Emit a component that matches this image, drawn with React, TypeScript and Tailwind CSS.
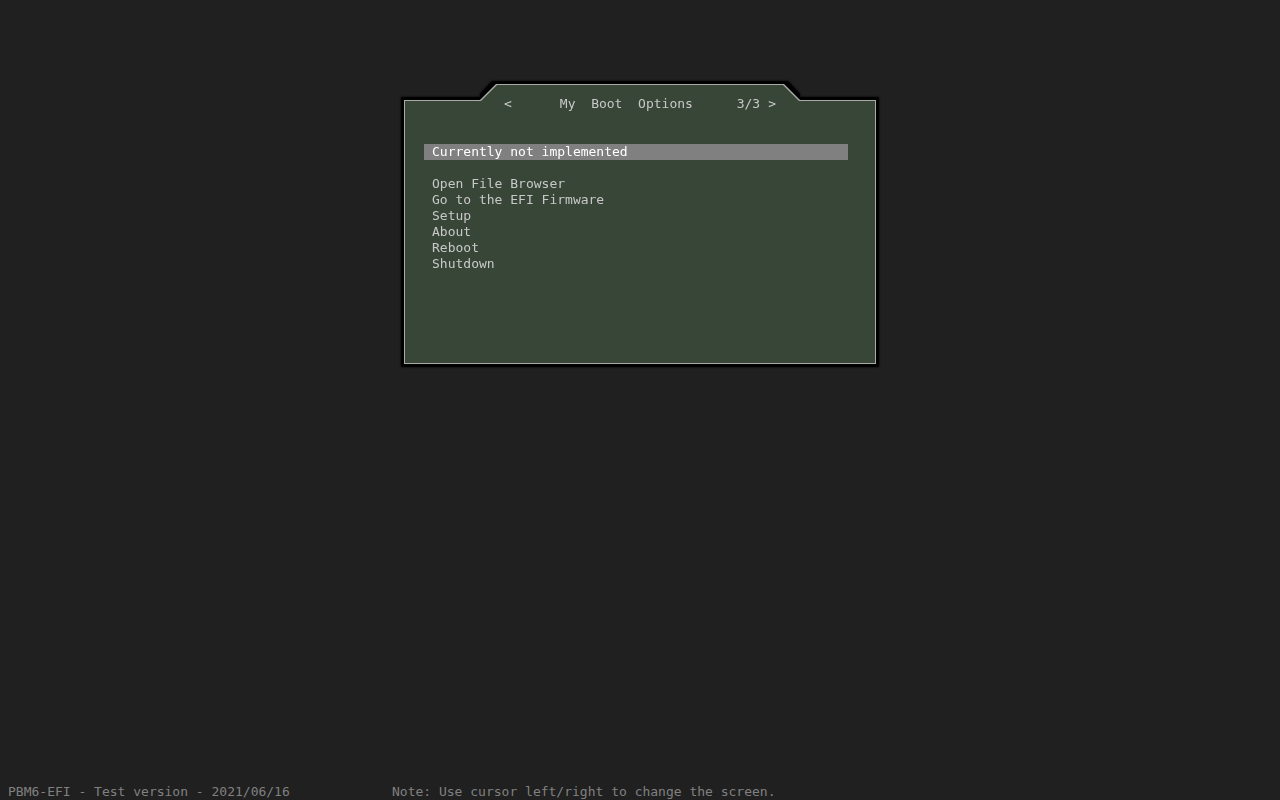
import React, { useState } from 'react';

const menuItems = [
  'Open File Browser',
  'Go to the EFI Firmware',
  'Setup',
  'About',
  'Reboot',
  'Shutdown',
];

// Folder outline: a raised tab with 16px slanted shoulders on a plain box
const folderShape =
  '[clip-path:polygon(0_16px,76px_16px,92px_0,calc(100%-92px)_0,calc(100%-76px)_16px,100%_16px,100%_100%,0_100%)]';

// Black rim behind the folder, cut straight where the shoulders begin
const rimShape =
  '[clip-path:polygon(0_17px,1px_16px,79px_16px,79px_13px,91px_0,calc(100%-91px)_0,calc(100%-79px)_13px,calc(100%-79px)_16px,calc(100%-1px)_16px,100%_17px,100%_calc(100%-1px),calc(100%-1px)_100%,1px_100%,0_calc(100%-1px))]';

interface MenuEntryProps {
  label: string;
  selected: boolean;
  onSelect: () => void;
}

const MenuEntry: React.FC<MenuEntryProps> = ({ label, selected, onSelect }) => (
  <li>
    <button
      onClick={onSelect}
      className={`block w-full px-2 text-left outline-none ${
        selected ? 'bg-[#808080] text-white' : 'text-[#c8c8c8]'
      }`}
    >
      {label}
    </button>
  </li>
);

export default function App() {
  const [selected, setSelected] = useState('Currently not implemented');

  return (
    <div className="min-h-screen flex flex-col bg-[#202020] font-['DejaVu_Sans_Mono',monospace] text-[13px] leading-4 whitespace-pre">
      <main className="flex-1 px-4 pt-[81px]">
        <div className="mx-auto max-w-[478px] drop-shadow-[0_0_1px_#000]">
          <div className={`bg-black p-[3px] ${rimShape}`}>
            <div className={`bg-[#a8aca8] p-px ${folderShape}`}>
              <div className={`min-h-[278px] bg-[#384638] pt-[11px] pr-[27px] pb-4 pl-[19px] ${folderShape}`}>
                {/* Tab */}
                <header className="flex items-center pl-20 pr-[72px] text-[#c8c8c8]">
                  <button aria-label="Previous screen">&lt;</button>
                  <h1 className="ml-12">My  Boot  Options</h1>
                  <span className="ml-auto">3/3</span>
                  <button aria-label="Next screen" className="ml-2">&gt;</button>
                </header>

                {/* Entries */}
                <ul className="mt-8">
                  <MenuEntry
                    label="Currently not implemented"
                    selected={selected === 'Currently not implemented'}
                    onSelect={() => setSelected('Currently not implemented')}
                  />
                </ul>
                <ul className="mt-4">
                  {menuItems.map((item) => (
                    <MenuEntry
                      key={item}
                      label={item}
                      selected={selected === item}
                      onSelect={() => setSelected(item)}
                    />
                  ))}
                </ul>
              </div>
            </div>
          </div>
        </div>
      </main>

      <footer className="flex px-2 text-[#808080]">
        <p className="w-96">PBM6-EFI - Test version - 2021/06/16</p>
        <p>Note: Use cursor left/right to change the screen.</p>
      </footer>
    </div>
  );
}
